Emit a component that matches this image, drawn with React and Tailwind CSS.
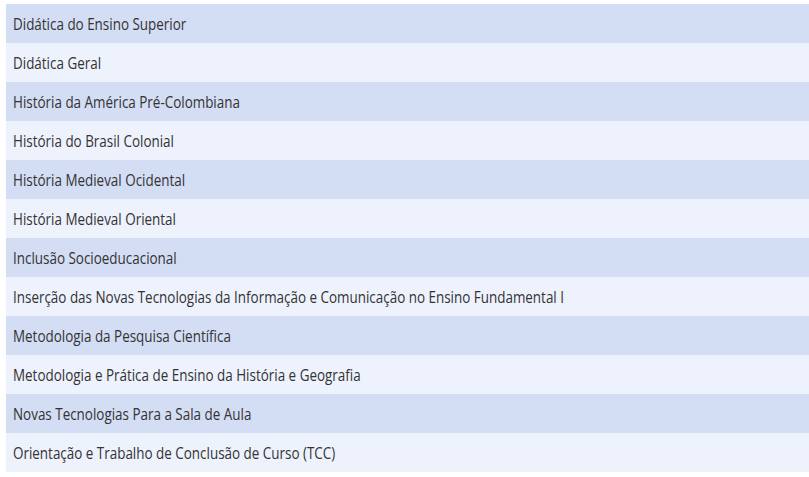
import React from 'react';

const courses = [
  'Didática do Ensino Superior',
  'Didática Geral',
  'História da América Pré-Colombiana',
  'História do Brasil Colonial',
  'História Medieval Ocidental',
  'História Medieval Oriental',
  'Inclusão Socioeducacional',
  'Inserção das Novas Tecnologias da Informação e Comunicação no Ensino Fundamental I',
  'Metodologia da Pesquisa Científica',
  'Metodologia e Prática de Ensino da História e Geografia',
  'Novas Tecnologias Para a Sala de Aula',
  'Orientação e Trabalho de Conclusão de Curso (TCC)',
];

const App = () => {
  return (
    <div className="min-h-screen bg-white pt-1 pl-1.5" style={{ fontFamily: '"Open Sans", sans-serif' }}>
      <ul>
        {courses.map((name, i) => (
          <li
            key={name}
            className={`flex h-[39px] items-center pl-[7px] ${i % 2 === 0 ? 'bg-[#d3ddf4]' : 'bg-[#eef2fd]'}`}
          >
            <span className="origin-left scale-x-[0.79] whitespace-nowrap text-[17px] text-[#333]">{name}</span>
          </li>
        ))}
      </ul>
    </div>
  );
};

export default App;
